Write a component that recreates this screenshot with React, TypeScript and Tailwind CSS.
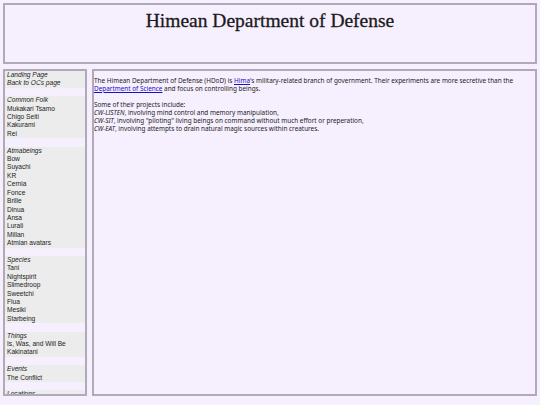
const groups: { title: string; items: string[] }[] = [
  { title: '', items: ['Landing Page', 'Back to OCs page'] },
  { title: 'Common Folk', items: ['Mukakari Tsamo', 'Chigo Seiti', 'Kakurami', 'Rei'] },
  {
    title: 'Atmabeings',
    items: ['Bow', 'Suyachi', 'KR', 'Cernia', 'Fonce', 'Brille', 'Dinua', 'Ansa', 'Lurali', 'Millan', 'Atmian avatars'],
  },
  { title: 'Species', items: ['Tani', 'Nightspirit', 'Slimedroop', 'Sweetchi', 'Flua', 'Mesiki', 'Starbeing'] },
  { title: 'Things', items: ['Is, Was, and Will Be', 'Kakinatani'] },
  { title: 'Events', items: ['The Conflict'] },
  { title: 'Locations', items: ['Hima'] },
];

const Row = ({ children, italic }: { children: React.ReactNode; italic?: boolean }) => (
  <div className={`h-[8.42px] leading-[8.42px] bg-[#ececec] px-[2px] whitespace-nowrap ${italic ? 'italic' : ''}`}>
    {children}
  </div>
);

const Sidebar = () => {
  return (
    <nav
      className="w-[84px] h-[327px] overflow-hidden border-2 border-[#b0a9b7] text-[6.6px] text-[#222] bg-[#f6effe]"
      style={{ fontFamily: '"Liberation Sans", Arial, sans-serif' }}
    >
      {groups.map((g, i) => (
        <div key={i}>
          {i > 0 && <div className="h-[8.42px]" />}
          {g.title && <Row italic>{g.title}</Row>}
          {g.items.map((item) => (
            <Row key={item} italic={i === 0}>
              {item}
            </Row>
          ))}
        </div>
      ))}
    </nav>
  );
};

export default function App() {
  return (
    <div className="min-h-screen bg-[#f6effe] p-[3px]">
      {/* Header */}
      <header className="h-[61px] border-2 border-[#b0a9b7] text-center">
        <h1
          className="text-[19.5px] leading-[24px] pt-[4px] text-[#1a1a1a] [-webkit-text-stroke:0.3px_#1a1a1a]"
          style={{ fontFamily: '"Liberation Serif", "Times New Roman", serif' }}
        >
          Himean Department of Defense
        </h1>
      </header>

      <div className="flex gap-[5px] mt-[5px]">
        <Sidebar />

        {/* Main */}
        <main
          className="flex-1 h-[327px] border-2 border-[#b0a9b7] px-[0px] text-[6.4px] leading-[8px] text-[#222]"
          style={{ fontFamily: '"Noto Sans", sans-serif' }}
        >
          <p className="mt-[6px]">
            The Himean Department of Defense (HDoD) is{' '}
            <a href="#" className="text-[#1a0dcc] underline">
              Hima
            </a>
            's military-related branch of government. Their experiments are more secretive than the{' '}
            <a href="#" className="text-[#1a0dcc] underline">
              Department of Science
            </a>{' '}
            and focus on controlling beings.
          </p>
          <p className="mt-[8px]">
            Some of their projects include:
            <br />
            <i>CW-LISTEN</i>, involving mind control and memory manipulation,
            <br />
            <i>CW-SIT</i>, involving "piloting" living beings on command without much effort or preperation,
            <br />
            <i>CW-EAT</i>, involving attempts to drain natural magic sources within creatures.
          </p>
        </main>
      </div>
    </div>
  );
}
